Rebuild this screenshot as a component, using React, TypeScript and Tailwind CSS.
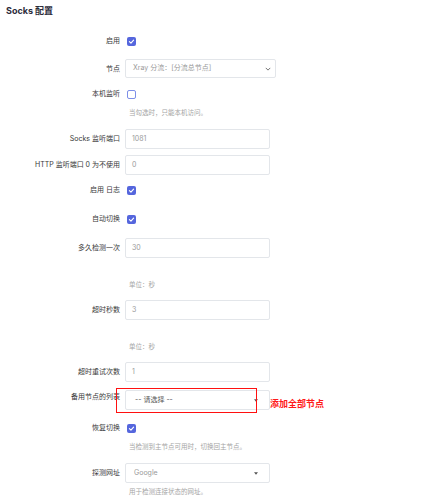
import React from "react";

const font = { fontFamily: 'Inter, "Noto Sans CJK SC", sans-serif' };

function Check({ checked = true }: { checked?: boolean }) {
  if (!checked)
    return <div className="ml-[2px] w-[9px] h-[9px] rounded-[2px] border border-[#7d8fe8] bg-white" />;
  return (
    <div className="ml-[2px] w-[9px] h-[9px] rounded-[2px] bg-[#5566dd] flex items-center justify-center">
      <svg width="7" height="7" viewBox="0 0 10 10">
        <path d="M2 5.2 L4.2 7.3 L8 3" stroke="white" strokeWidth="1.6" fill="none" strokeLinecap="round" strokeLinejoin="round" />
      </svg>
    </div>
  );
}

function Row({ label, children, className = "" }: { label: string; children: React.ReactNode; className?: string }) {
  return (
    <div className={`flex items-center h-[20px] ${className}`}>
      <div className="w-[120px] shrink-0 text-right text-[7px] leading-[10px] text-[#383838]">{label}</div>
      <div className="ml-[5px] flex items-center">{children}</div>
    </div>
  );
}

function Input({ value }: { value: string }) {
  return (
    <div className="w-[145px] h-[20px] border border-[#e3e6ea] rounded-[2px] pl-[6px] flex items-center text-[7px] text-[#9a9a9a] bg-white">
      {value}
    </div>
  );
}

function Hint({ text, className = "" }: { text: string; className?: string }) {
  return <div className={`pl-[129px] h-[10px] text-[6.5px] leading-[10px] text-[#a5a5a5] ${className}`}>{text}</div>;
}

function Triangle() {
  return (
    <svg width="4" height="3" viewBox="0 0 6 4" className="absolute right-[11px] top-[8px]">
      <path d="M0 0 L6 0 L3 4 Z" fill="#555" />
    </svg>
  );
}

export default function App() {
  return (
    <div style={font} className="w-[437px] h-[500px] bg-white overflow-hidden">
      <div className="h-[22px] pl-[6px] flex items-center text-[9px] font-bold text-[#2b2b3a]">Socks 配置</div>
      <Row label="启用" className="mt-[9px]">
        <Check />
      </Row>
      <Row label="节点" className="mt-[8px] !h-[19px]">
        <div className="relative w-[151px] h-[19px] border border-[#e3e6ea] rounded-[2px] pl-[7px] flex items-center text-[7px] text-[#9a9a9a]">
          Xray 分流：[分流总节点]
          <svg width="6" height="4" viewBox="0 0 8 5" className="absolute right-[4px] top-[7px]">
            <path d="M1 1 L4 4 L7 1" stroke="#666" strokeWidth="1.2" fill="none" />
          </svg>
        </div>
      </Row>
      <Row label="本机监听" className="mt-[6px]">
        <Check checked={false} />
      </Row>
      <Hint text="当勾选时，只能本机访问。" className="mt-[4px]" />
      <Row label="Socks 监听端口" className="mt-[11px]">
        <Input value="1081" />
      </Row>
      <Row label="HTTP 监听端口 0 为不使用" className="mt-[6px]">
        <Input value="0" />
      </Row>
      <Row label="启用 日志" className="mt-[5px]">
        <Check />
      </Row>
      <Row label="自动切换" className="mt-[9px]">
        <Check />
      </Row>
      <Row label="多久检测一次" className="mt-[9px]">
        <Input value="30" />
      </Row>
      <Hint text="单位：秒" className="mt-[22px]" />
      <Row label="超时秒数" className="mt-[10px]">
        <Input value="3" />
      </Row>
      <Hint text="单位：秒" className="mt-[22px]" />
      <Row label="超时重试次数" className="mt-[10px]">
        <Input value="1" />
      </Row>
      <div className="flex items-start h-[20px] mt-[8px]">
        <div className="w-[120px] shrink-0 text-right text-[7px] leading-[10px] text-[#383838] mt-[2px]">备用节点的列表</div>
        <div className="ml-[5px] relative flex items-start">
          <div className="relative w-[145px] h-[20px] border border-[#e3e6ea] rounded-[2px] pl-[9px] flex items-center text-[7px] text-[#555]">
            -- 请选择 --
            <Triangle />
          </div>
          <div className="absolute left-[-9px] top-[-2px] w-[141px] h-[25px] border-[1.5px] border-[#ff1010]" />
          <div className="mt-[8px] text-[9px] leading-[12px] font-bold text-[#ff1a1a] whitespace-nowrap">添加全部节点</div>
        </div>
      </div>
      <Row label="恢复切换" className="mt-[8px]">
        <Check />
      </Row>
      <Hint text="当检测到主节点可用时，切换回主节点。" className="mt-[4px]" />
      <Row label="探测网址" className="mt-[11px]">
        <div className="relative w-[145px] h-[20px] border border-[#e3e6ea] rounded-[2px] pl-[8px] flex items-center text-[7px] text-[#9a9a9a]">
          Google
          <Triangle />
        </div>
      </Row>
      <Hint text="用于检测连接状态的网址。" className="mt-[4px]" />
    </div>
  );
}
